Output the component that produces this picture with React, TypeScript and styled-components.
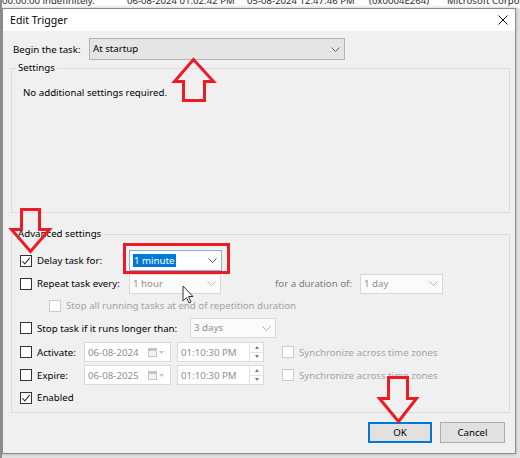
import React from 'react';
import styled, { createGlobalStyle } from 'styled-components';

const GlobalStyle = createGlobalStyle`
  html, body {
    margin: 0;
    padding: 0;
    background: #d6d6d6;
  }
  body {
    font-family: 'Noto Sans', 'Open Sans', sans-serif;
    font-size: 9.7px;
    color: #000;
  }
  * {
    box-sizing: border-box;
  }
`;

const RED = '#ed1c24';

// window behind the dialog (task list row, cut off)
const Page = styled.div`
  position: relative;
  width: 520px;
  height: 458px;
  overflow: hidden;
  background: #e4e4e4;
  border-left: 2px solid #8c8c8c;
`;

const BackList = styled.div`
  display: flex;
  height: 8px;
  overflow: hidden;
  background: #fff;
  font-size: 9.6px;
  line-height: 12px;
  color: #2a2a2a;
  white-space: nowrap;
`;

const ListCell = styled.span<{ $w?: number }>`
  flex: ${(p) => (p.$w ? `0 0 ${p.$w}px` : '1')};
  margin-top: -5px;
  overflow: hidden;
`;

const Dialog = styled.div`
  display: flex;
  flex-direction: column;
  width: 514px;
  height: 446px;
  border: 1px solid #8a8a8a;
  background: #f0f0f0;
  box-shadow: 0 0 4px rgba(0, 0, 0, 0.25);
`;

const TitleBar = styled.div`
  display: flex;
  align-items: center;
  justify-content: space-between;
  height: 22px;
  padding: 0 7px 0 7px;
  background: #fff;
  font-size: 10.6px;
`;

const CloseIcon = styled.svg`
  width: 10px;
  height: 10px;
`;

const Body = styled.div`
  display: flex;
  flex-direction: column;
  flex: 1;
  padding: 7px 5px 0 8px;
`;

const BeginRow = styled.div`
  display: flex;
  align-items: center;
  height: 22px;
  padding-left: 2px;
`;

const FieldLabel = styled.span<{ $w: number; $muted?: boolean; $ml?: number }>`
  flex: 0 0 ${(p) => p.$w}px;
  margin-left: ${(p) => p.$ml ?? 0}px;
  color: ${(p) => (p.$muted ? '#7c7c7c' : '#000')};
  white-space: nowrap;
`;

type Tone = 'gray' | 'white' | 'disabled';

const ComboBox = styled.div<{ $w: number; $h: number; $tone: Tone }>`
  display: flex;
  align-items: center;
  flex: 0 0 ${(p) => p.$w}px;
  height: ${(p) => p.$h}px;
  padding: 0 4px 0 3px;
  border: 1px solid
    ${(p) => (p.$tone === 'gray' ? '#b4b4b4' : p.$tone === 'white' ? '#7eb4ea' : '#d9d9d9')};
  background: ${(p) => (p.$tone === 'gray' ? '#e5e5e5' : p.$tone === 'white' ? '#fff' : '#fbfbfb')};
  color: ${(p) => (p.$tone === 'disabled' ? '#8f8f8f' : '#000')};
`;

const ComboText = styled.span`
  flex: 1;
  white-space: nowrap;
  line-height: 16px;
`;

const Selected = styled.span`
  padding: 0 1px;
  background: #0078d7;
  color: #fff;
  line-height: 16px;
`;

const ChevronSvg = styled.svg<{ $dim?: boolean }>`
  flex: 0 0 9px;
  height: 5px;
  stroke: ${(p) => (p.$dim ? '#b5b5b5' : '#5a5a5a')};
`;

const Chevron = ({ dim }: { dim?: boolean }) => (
  <ChevronSvg $dim={dim} viewBox="0 0 9 5" fill="none" strokeWidth={1}>
    <polyline points="0.5,0.5 4.5,4.5 8.5,0.5" />
  </ChevronSvg>
);

const Group = styled.fieldset<{ $mt: number }>`
  margin: ${(p) => p.$mt}px 0 0 0;
  padding: 0;
  min-width: 0;
  border: 1px solid #dcdcdc;
`;

const GroupLegend = styled.legend`
  margin-left: 4px;
  padding: 0 2px;
  line-height: 14px;
`;

const SettingsBody = styled.div`
  height: 137px;
  padding: 11px 0 0 11px;
  line-height: 14px;
`;

const AdvancedBody = styled.div`
  display: flex;
  flex-direction: column;
  padding: 8px 0 3px 8px;
`;

const Row = styled.div<{ $h: number }>`
  display: flex;
  align-items: center;
  height: ${(p) => p.$h}px;
`;

const Box = styled.span<{ $disabled?: boolean; $indent?: number }>`
  display: flex;
  align-items: center;
  justify-content: center;
  flex: 0 0 12px;
  height: 12px;
  margin-left: ${(p) => p.$indent ?? 0}px;
  margin-right: 5px;
  border: 1px solid ${(p) => (p.$disabled ? '#cccccc' : '#333')};
  background: #fff;
`;

const CheckMark = styled.svg`
  width: 10px;
  height: 10px;
`;

const CheckBox = ({ checked, disabled, indent }: { checked?: boolean; disabled?: boolean; indent?: number }) => (
  <Box $disabled={disabled} $indent={indent}>
    {checked && (
      <CheckMark viewBox="0 0 10 10" fill="none" stroke="#333" strokeWidth={1.1}>
        <polyline points="1.2,5 3.8,7.8 8.8,1.8" />
      </CheckMark>
    )}
  </Box>
);

const CheckLabel = styled.span<{ $w?: number; $disabled?: boolean }>`
  flex: ${(p) => (p.$w ? `0 0 ${p.$w}px` : '0 0 auto')};
  color: ${(p) => (p.$disabled ? '#a3a3a3' : '#000')};
  white-space: nowrap;
`;

const InputBox = styled.div<{ $ml?: number }>`
  display: flex;
  align-items: center;
  flex: 0 0 87px;
  height: 20px;
  margin-left: ${(p) => p.$ml ?? 0}px;
  padding-left: 3px;
  border: 1px solid #d9d9d9;
  background: #fff;
  color: #8f8f8f;
`;

const InputText = styled.span`
  flex: 1;
  white-space: nowrap;
`;

const CalIcon = styled.svg`
  flex: 0 0 16px;
  height: 9px;
  margin-right: 6px;
`;

const Spinner = styled.div`
  display: flex;
  flex-direction: column;
  flex: 0 0 14px;
  align-self: stretch;
  border-left: 1px solid #e2e2e2;
`;

const SpinHalf = styled.div<{ $down?: boolean }>`
  display: flex;
  align-items: center;
  justify-content: center;
  flex: 1;
  border-top: ${(p) => (p.$down ? '1px solid #e2e2e2' : 'none')};
  &::after {
    content: '';
    border-left: 2.5px solid transparent;
    border-right: 2.5px solid transparent;
    ${(p) => (p.$down ? 'border-top: 3px solid #7a7a7a;' : 'border-bottom: 3px solid #7a7a7a;')}
  }
`;

const SyncBox = styled.span`
  display: flex;
  align-items: center;
  margin-left: 18px;
`;

const ButtonRow = styled.div`
  display: flex;
  justify-content: flex-end;
  gap: 8px;
  margin-top: 9px;
  padding-right: 5px;
`;

const Button = styled.button<{ $primary?: boolean }>`
  width: ${(p) => (p.$primary ? 64 : 65)}px;
  height: 21px;
  padding: 0;
  font-family: inherit;
  font-size: 9.7px;
  color: #000;
  background: #e1e1e1;
  border: 1px solid ${(p) => (p.$primary ? '#0078d7' : '#adadad')};
  box-shadow: ${(p) => (p.$primary ? 'inset 0 0 0 1px #0078d7' : 'none')};
`;

const Annotations = styled.svg`
  position: absolute;
  left: -2px;
  top: 0;
  width: 520px;
  height: 458px;
  pointer-events: none;
`;

const DateInput = ({ value }: { value: string }) => (
  <InputBox>
    <InputText>{value}</InputText>
    <CalIcon viewBox="0 0 16 9">
      <rect x="0.5" y="0.5" width="8" height="8" fill="#f4f4f4" stroke="#c4c4c4" />
      <rect x="1" y="1" width="7" height="2" fill="#c4c4c4" />
      <polygon points="11,3 16,3 13.5,6" fill="#c4c4c4" />
    </CalIcon>
  </InputBox>
);

const TimeInput = () => (
  <InputBox $ml={6}>
    <InputText>01:10:30 PM</InputText>
    <Spinner>
      <SpinHalf />
      <SpinHalf $down />
    </Spinner>
  </InputBox>
);

export default function App() {
  return (
    <>
      <GlobalStyle />
      <Page>
        <BackList>
          <ListCell $w={125}>00:00:00 indefinitely.</ListCell>
          <ListCell $w={120}>06-08-2024 01:02:42 PM</ListCell>
          <ListCell $w={122}>05-08-2024 12:47:46 PM</ListCell>
          <ListCell $w={78}>(0x0004E264)</ListCell>
          <ListCell>Microsoft Corporation</ListCell>
        </BackList>

        <Dialog>
          <TitleBar>
            <span>Edit Trigger</span>
            <CloseIcon viewBox="0 0 10 10" stroke="#111" strokeWidth={1}>
              <line x1="0.5" y1="0.5" x2="9.5" y2="9.5" />
              <line x1="9.5" y1="0.5" x2="0.5" y2="9.5" />
            </CloseIcon>
          </TitleBar>

          <Body>
            <BeginRow>
              <FieldLabel $w={76}>Begin the task:</FieldLabel>
              <ComboBox $w={256} $h={22} $tone="gray">
                <ComboText>At startup</ComboText>
                <Chevron />
              </ComboBox>
            </BeginRow>

            <Group $mt={1}>
              <GroupLegend>Settings</GroupLegend>
              <SettingsBody>No additional settings required.</SettingsBody>
            </Group>

            <Group $mt={14}>
              <GroupLegend>Advanced settings</GroupLegend>
              <AdvancedBody>
                <Row $h={23}>
                  <CheckBox checked />
                  <CheckLabel $w={92}>Delay task for:</CheckLabel>
                  <ComboBox $w={93} $h={21} $tone="white">
                    <ComboText>
                      <Selected>1 minute</Selected>
                    </ComboText>
                    <Chevron />
                  </ComboBox>
                </Row>

                <Row $h={23}>
                  <CheckBox />
                  <CheckLabel $w={92}>Repeat task every:</CheckLabel>
                  <ComboBox $w={92} $h={20} $tone="disabled">
                    <ComboText>1 hour</ComboText>
                    <Chevron dim />
                  </ComboBox>
                  <FieldLabel $w={85} $ml={54} $muted>
                    for a duration of:
                  </FieldLabel>
                  <ComboBox $w={83} $h={20} $tone="disabled">
                    <ComboText>1 day</ComboText>
                    <Chevron dim />
                  </ComboBox>
                </Row>

                <Row $h={21}>
                  <CheckBox disabled indent={29} />
                  <CheckLabel $disabled>Stop all running tasks at end of repetition duration</CheckLabel>
                </Row>

                <Row $h={24}>
                  <CheckBox />
                  <CheckLabel $w={153}>Stop task if it runs longer than:</CheckLabel>
                  <ComboBox $w={86} $h={20} $tone="disabled">
                    <ComboText>3 days</ComboText>
                    <Chevron dim />
                  </ComboBox>
                </Row>

                <Row $h={24}>
                  <CheckBox />
                  <CheckLabel $w={47}>Activate:</CheckLabel>
                  <DateInput value="06-08-2024" />
                  <TimeInput />
                  <SyncBox>
                    <CheckBox disabled />
                    <CheckLabel $disabled>Synchronize across time zones</CheckLabel>
                  </SyncBox>
                </Row>

                <Row $h={22}>
                  <CheckBox />
                  <CheckLabel $w={47}>Expire:</CheckLabel>
                  <DateInput value="06-08-2025" />
                  <TimeInput />
                  <SyncBox>
                    <CheckBox disabled />
                    <CheckLabel $disabled>Synchronize across time zones</CheckLabel>
                  </SyncBox>
                </Row>

                <Row $h={23}>
                  <CheckBox checked />
                  <CheckLabel>Enabled</CheckLabel>
                </Row>
              </AdvancedBody>
            </Group>

            <ButtonRow>
              <Button $primary>OK</Button>
              <Button>Cancel</Button>
            </ButtonRow>
          </Body>
        </Dialog>

        {/* red markup drawn over the screenshot */}
        <Annotations viewBox="0 0 520 458" fill="none" stroke={RED} strokeWidth={3} strokeLinejoin="miter">
          <path d="M193.5,59.5 L174.5,81.5 L183.5,81.5 L183.5,100.5 L204.5,100.5 L204.5,81.5 L213.5,81.5 Z" />
          <path d="M21.5,209.5 L39.5,209.5 L39.5,229.5 L49.5,229.5 L30.5,251.5 L11.5,229.5 L21.5,229.5 Z" />
          <path d="M388.5,377.5 L407.5,377.5 L407.5,398.5 L416.5,398.5 L398.5,421.5 L379.5,398.5 L388.5,398.5 Z" />
          <rect x="124.5" y="244.5" width="104" height="28" />
          <path
            d="M183,286 L183,301 L186.5,297.5 L189,303 L191,302 L188.5,296.5 L193,296.5 Z"
            fill="#fff"
            stroke="#333"
            strokeWidth={1}
          />
        </Annotations>
      </Page>
    </>
  );
}
